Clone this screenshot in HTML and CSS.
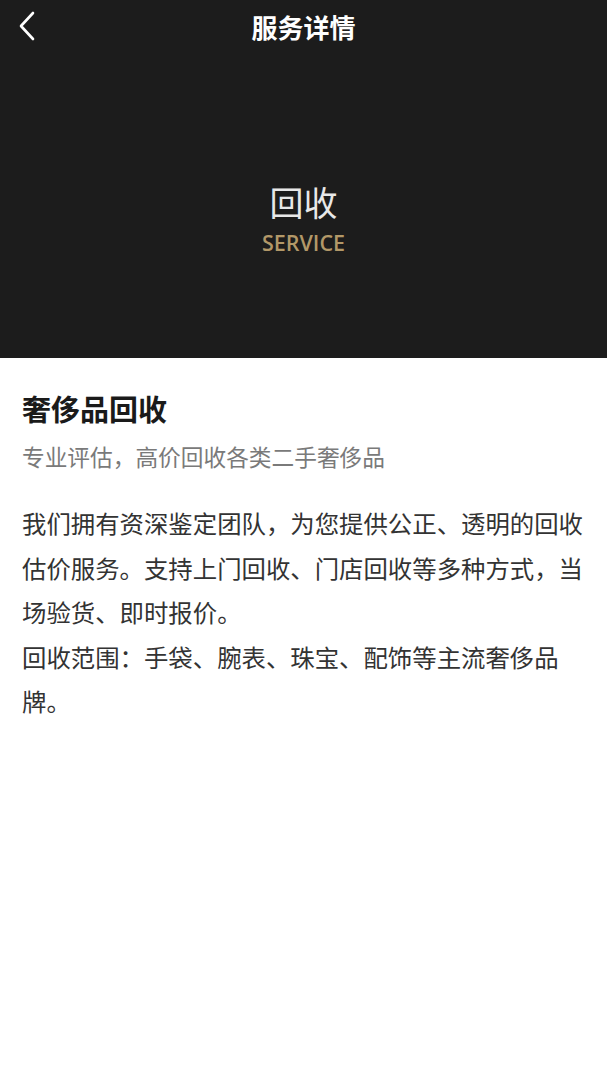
FILE: index.html
```html
<!DOCTYPE html>
<html lang="zh-CN">
<head>
<meta charset="utf-8">
<title>服务详情</title>
<link rel="stylesheet" href="styles.css">
</head>
<body>
<div class="hero">
  <div class="nav">
    <button class="back" aria-label="返回">
      <svg width="20" height="30" viewBox="0 0 20 30"><path d="M15 2 L3 15 L15 28" fill="none" stroke="#ffffff" stroke-width="2.6" stroke-linecap="round" stroke-linejoin="round"/></svg>
    </button>
    <div class="nav-title">服务详情</div>
  </div>
  <div class="hero-body">
    <div class="hero-title">回收</div>
    <div class="hero-sub">SERVICE</div>
  </div>
</div>
<div class="content">
  <h1 class="title">奢侈品回收</h1>
  <p class="subtitle">专业评估，高价回收各类二手奢侈品</p>
  <p class="desc">我们拥有资深鉴定团队，为您提供公正、透明的回收估价服务。支持上门回收、门店回收等多种方式，当场验货、即时报价。<br>回收范围：手袋、腕表、珠宝、配饰等主流奢侈品牌。</p>
</div>
</body>
</html>
```

FILE: styles.css
```css
* { box-sizing: border-box; }
html, body { margin: 0; padding: 0; background: #ffffff; }
body {
  font-family: "Noto Sans CJK SC", "Noto Sans", sans-serif;
  width: 607px;
}
.hero {
  background: #1c1c1c;
  height: 358px;
  display: flex;
  flex-direction: column;
}
.nav {
  height: 56px;
  display: flex;
  align-items: center;
  justify-content: center;
  position: relative;
}
.back {
  position: absolute;
  left: 16px;
  top: 11px;
  background: none;
  border: 0;
  padding: 0;
  width: 24px;
  height: 30px;
}
.nav-title {
  color: #ffffff;
  font-size: 26px;
  font-weight: 700;
  line-height: 1;
  margin-top: -2px;
}
.hero-body {
  flex: 1;
  display: flex;
  flex-direction: column;
  align-items: center;
  padding-top: 128px;
}
.hero-title {
  color: #e8e8e8;
  font-size: 34px;
  line-height: 36px;
}
.hero-sub {
  color: #b29868;
  font-family: "Open Sans", "Noto Sans", sans-serif;
  font-size: 21.5px;
  font-weight: 600;
  line-height: 26px;
  margin-top: 10px;
}
.content {
  padding: 24px 22px;
}
.title {
  margin: 0;
  font-size: 29px;
  font-weight: 700;
  color: #1a1a1a;
  line-height: 52px;
}
.subtitle {
  margin: 8px 0 0;
  font-size: 22.7px;
  color: #7a7a7a;
  line-height: 30px;
}
.desc {
  margin: 29px 0 0;
  font-size: 24.4px;
  line-height: 44.5px;
  color: #333333;
}
```
